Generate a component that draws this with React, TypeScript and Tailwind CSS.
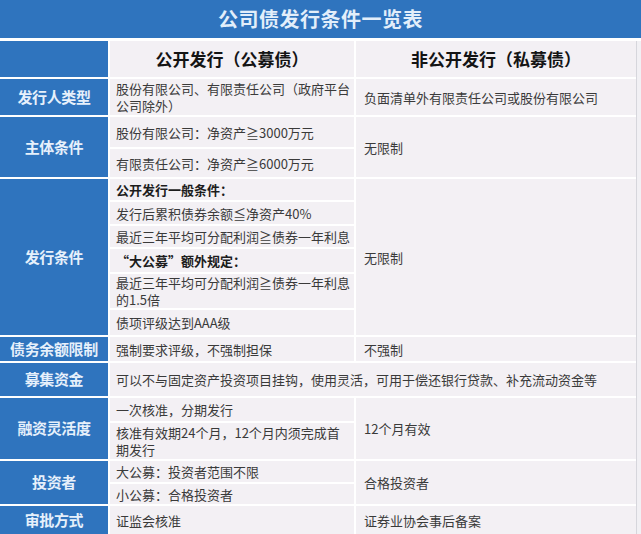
const font = { fontFamily: '"Noto Sans CJK SC", "Noto Sans", sans-serif' };

function Label({ children, span = "" }: { children: React.ReactNode; span?: string }) {
  return (
    <div className={`${span} bg-[#2f74be] flex items-center justify-center text-[15px] font-bold text-[#e6f0fb] tracking-tight`}>
      {children}
    </div>
  );
}

function Mid({ children, bold = false, span = "" }: { children: React.ReactNode; bold?: boolean; span?: string }) {
  return (
    <div
      className={`${span} bg-[#f3f0f4] flex items-center pl-[6px] pr-1 text-[13px] leading-[17px] ${
        bold ? "font-bold text-[#1c1c1c]" : "text-[#3a3a3a]"
      }`}
    >
      <div>{children}</div>
    </div>
  );
}

function Right({ children, span = "" }: { children: React.ReactNode; span?: string }) {
  return (
    <div className={`${span} bg-[#f3f0f4] flex items-center pl-[8px] text-[13px] leading-[17px] text-[#3a3a3a]`}>
      {children}
    </div>
  );
}

export default function App() {
  return (
    <div className="w-[641px] h-[534px] bg-white overflow-hidden" style={font}>
      {/* Title */}
      <div className="h-[38px] bg-[#2f74be] flex items-center justify-center text-[20px] font-bold text-[#e2eefa] tracking-wide">
        公司债发行条件一览表
      </div>

      <div className="mt-[3px] flex">
        <div className="w-[636px] grid grid-cols-[108px_244px_1fr] gap-[2px] grid-rows-[36px_36px_30px_28px_21px_22px_21px_23px_34px_25px_24px_33px_23px_36px_21px_20px_28px]">
          {/* Header */}
          <div className="bg-[#2f74be]" />
          <div className="bg-[#f3f0f4] flex items-center justify-center text-[17px] font-bold text-[#141414]">
            公开发行（公募债）
          </div>
          <div className="bg-[#f3f0f4] flex items-center justify-center text-[17px] font-bold text-[#141414]">
            非公开发行（私募债）
          </div>

          {/* 发行人类型 */}
          <Label>发行人类型</Label>
          <Mid>
            股份有限公司、有限责任公司（政府平台
            <br />
            公司除外）
          </Mid>
          <Right>负面清单外有限责任公司或股份有限公司</Right>

          {/* 主体条件 */}
          <Label span="row-span-2">主体条件</Label>
          <Mid>股份有限公司：净资产≧3000万元</Mid>
          <Right span="row-span-2">无限制</Right>
          <Mid>有限责任公司：净资产≧6000万元</Mid>

          {/* 发行条件 */}
          <Label span="row-span-6">发行条件</Label>
          <Mid bold>公开发行一般条件：</Mid>
          <Right span="row-span-6">无限制</Right>
          <Mid>发行后累积债券余额≦净资产40%</Mid>
          <Mid>最近三年平均可分配利润≧债券一年利息</Mid>
          <Mid bold>“大公募”额外规定：</Mid>
          <Mid>
            最近三年平均可分配利润≧债券一年利息
            <br />
            的1.5倍
          </Mid>
          <Mid>债项评级达到AAA级</Mid>

          {/* 债务余额限制 */}
          <Label>债务余额限制</Label>
          <Mid>强制要求评级，不强制担保</Mid>
          <Right>不强制</Right>

          {/* 募集资金 */}
          <Label>募集资金</Label>
          <Mid span="col-span-2">可以不与固定资产投资项目挂钩，使用灵活，可用于偿还银行贷款、补充流动资金等</Mid>

          {/* 融资灵活度 */}
          <Label span="row-span-2">融资灵活度</Label>
          <Mid>一次核准，分期发行</Mid>
          <Right span="row-span-2">12个月有效</Right>
          <Mid>
            核准有效期24个月，12个月内须完成首
            <br />
            期发行
          </Mid>

          {/* 投资者 */}
          <Label span="row-span-2">投资者</Label>
          <Mid>大公募：投资者范围不限</Mid>
          <Right span="row-span-2">合格投资者</Right>
          <Mid>小公募：合格投资者</Mid>

          {/* 审批方式 */}
          <Label>审批方式</Label>
          <Mid>证监会核准</Mid>
          <Right>证券业协会事后备案</Right>
        </div>
        <div className="flex-1 border-l border-[#d6d6dc] bg-[#f1f0f4]" />
      </div>
    </div>
  );
}
